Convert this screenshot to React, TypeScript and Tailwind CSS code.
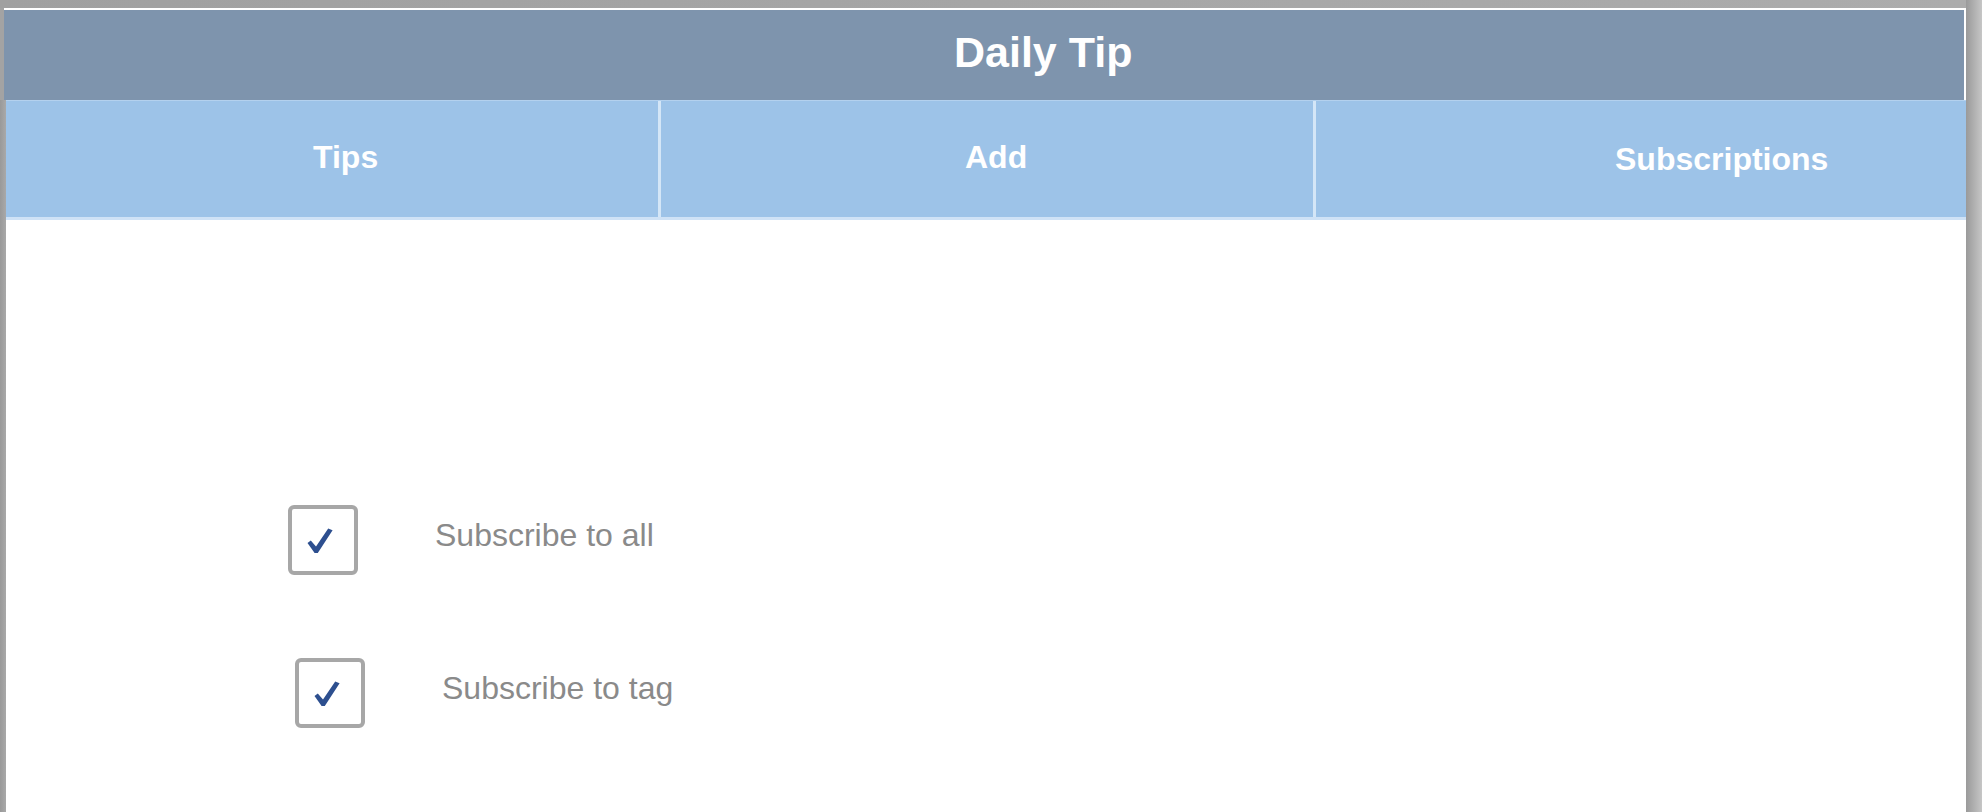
import React, { useState } from 'react';

const Check = () => (
  <svg width="26" height="26" viewBox="0 0 26 26" className="block">
    <path d="M0.5 15 L3.8 12.6 L9 18.6 L21.2 0.6 L25.6 2.2 L10.8 25 L7.6 25 Z" fill="#2d4f8f" />
  </svg>
);

interface RowProps {
  label: string;
  checked: boolean;
  onToggle: () => void;
  indent: string;
}

const CheckRow: React.FC<RowProps> = ({ label, checked, onToggle, indent }) => (
  <div className={`flex items-start ${indent}`}>
    <button
      onClick={onToggle}
      className="flex h-[70px] w-[70px] shrink-0 items-center justify-center rounded-[6px] border-[4px] border-[#a7a7a7] bg-white pr-[6px] pt-[2px]"
    >
      {checked && <Check />}
    </button>
    <span className="ml-[77px] mt-[14px] text-[32px] leading-[32px] text-[#8a8a8a]">{label}</span>
  </div>
);

const App: React.FC = () => {
  const [all, setAll] = useState(true);
  const [tag, setTag] = useState(true);

  return (
    <div className="flex h-[812px] w-[1982px] overflow-hidden bg-[#a3a3a3] font-['Liberation_Sans',Arial,sans-serif]">
      <div className="flex w-[1966px] flex-col">
        <div className="h-[8px] shrink-0 bg-gradient-to-r from-[#a0a0a0] to-[#acacac]" />
        <div className="ml-[4px] h-[92px] shrink-0 border-t-2 border-r-2 border-white bg-[#7e94ad] pl-[950px] pt-[21px]">
          <h1 className="text-[43px] font-bold leading-[43px] text-white">Daily Tip</h1>
        </div>
        <div className="flex min-h-0 flex-1">
          <div className="w-[6px] shrink-0 bg-gradient-to-r from-[#999999] to-[#a9a9a9]" />
          <div className="flex flex-1 flex-col bg-white">
            <div className="flex h-[120px] shrink-0 border-t border-b-[3px] border-t-[#b4d1ee] border-b-[#cfe2f6] bg-[#9dc3e8] text-[32px] font-bold leading-[32px] text-white">
              <div className="w-[655px] shrink-0 border-r-[3px] border-[#d4e6f7] pl-[307px] pt-[40px]">Tips</div>
              <div className="w-[655px] shrink-0 border-r-[3px] border-[#d4e6f7] pl-[304px] pt-[40px]">Add</div>
              <div className="flex-1 pl-[299px] pt-[42px]">Subscriptions</div>
            </div>
            <div className="flex flex-col pt-[285px]">
              <CheckRow label="Subscribe to all" checked={all} onToggle={() => setAll(!all)} indent="pl-[282px]" />
              <div className="h-[83px]" />
              <CheckRow label="Subscribe to tag" checked={tag} onToggle={() => setTag(!tag)} indent="pl-[289px]" />
            </div>
          </div>
        </div>
      </div>
      <div className="w-[16px] shrink-0 bg-gradient-to-r from-[#9a9a9a] to-[#c6c6c6]" />
    </div>
  );
};

export default App;
